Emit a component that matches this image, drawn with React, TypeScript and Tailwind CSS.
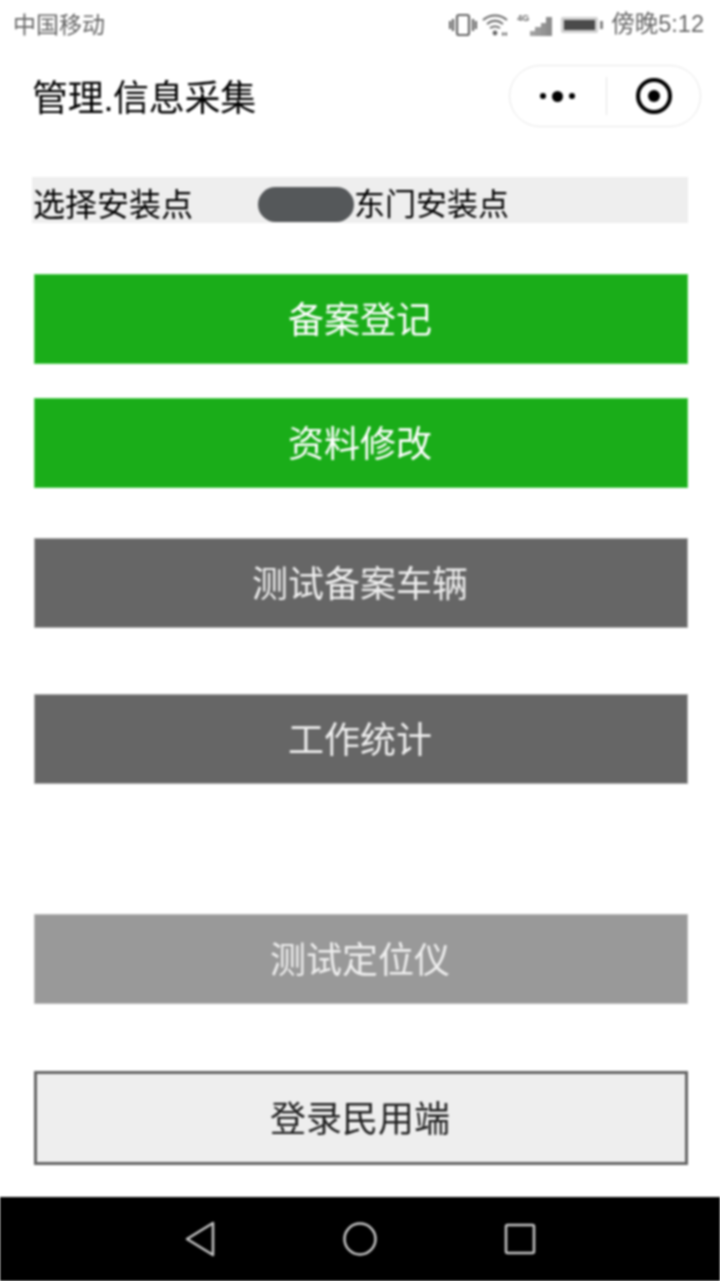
const cjk = "font-['Liberation_Sans','Noto_Sans_CJK_SC',sans-serif]";

function StatusIcons() {
  return (
    <div className="flex items-center gap-[5px] text-[#666]">
      <svg width="28" height="24" viewBox="0 0 28 24" fill="none" stroke="currentColor" strokeWidth="2.2">
        <rect x="8" y="2" width="12" height="20" rx="2" />
        <path d="M4 6v12M24 6v12M1 8v8M27 8v8" />
      </svg>
      <svg width="28" height="24" viewBox="0 0 28 24" fill="none" stroke="currentColor" strokeWidth="1.8">
        <path d="M1 7c7-6 17-6 24 0M5 11c5-4 11-4 16 0M8 15c3-2 7-2 10 0" />
        <circle cx="13" cy="20" r="1.5" fill="currentColor" />
        <path d="M20 21h6" strokeWidth="3" strokeDasharray="2 1" />
      </svg>
      <div className="relative h-[24px] w-[38px]">
        <span className="absolute left-[2px] top-[1px] text-[9px] font-bold leading-none">4G</span>
        <svg width="38" height="24" viewBox="0 0 38 24" fill="currentColor">
          <rect x="15" y="18" width="5" height="5" opacity="0.6" />
          <rect x="20" y="14" width="6" height="9" opacity="0.65" />
          <rect x="26" y="10" width="5" height="13" opacity="0.7" />
          <rect x="31" y="4" width="6" height="19" opacity="0.75" />
        </svg>
      </div>
      <svg width="44" height="24" viewBox="0 0 44 24" fill="currentColor" className="ml-[2px]">
        <rect x="1" y="4" width="37" height="16" rx="2" fill="#cfcfcf" />
        <rect x="4" y="7" width="31" height="10" fill="#4a4a4a" />
        <rect x="40" y="8" width="3" height="8" opacity="0.8" />
      </svg>
      <span className="ml-[2px] text-[23.5px] leading-none">傍晚5:12</span>
    </div>
  );
}

function Capsule() {
  return (
    <div className="flex h-[62px] w-[192px] items-center rounded-full border border-[#e8e8e8] bg-white">
      <div className="flex w-[96px] items-center justify-center gap-[6px] pr-[2px]">
        <span className="size-[6px] rounded-full bg-black" />
        <span className="size-[11px] rounded-full bg-black" />
        <span className="size-[6px] rounded-full bg-black" />
      </div>
      <div className="h-[38px] w-px bg-[#e4e4e4]" />
      <div className="flex flex-1 items-center justify-center">
        <div className="flex size-[36px] items-center justify-center rounded-full border-[4px] border-black">
          <span className="size-[12px] rounded-full bg-black" />
        </div>
      </div>
    </div>
  );
}

function Btn({ label, className }: { label: string; className: string }) {
  return (
    <div className={`ml-[34px] mr-[32px] flex shrink-0 items-center justify-center pr-[2px] pt-[4px] text-[36px] leading-none ${className}`}>
      {label}
    </div>
  );
}

export default function App() {
  return (
    <div className={`${cjk} flex h-[1281px] w-[720px] flex-col overflow-hidden bg-white blur-[1px]`}>
      <div className="flex h-[50px] shrink-0 items-center justify-between pl-[13px] pr-[16px]">
        <span className="text-[23px] leading-none text-[#666]">中国移动</span>
        <StatusIcons />
      </div>
      <div className="flex h-[92px] shrink-0 items-center justify-between pl-[32px] pr-[19px]">
        <h1 className="pt-[6px] text-[36px] font-normal leading-none tracking-[-0.3px] text-black">管理.信息采集</h1>
        <Capsule />
      </div>

      <div className="mx-[32px] mt-[35px] flex h-[46px] shrink-0 items-start bg-[#eeeeee] pl-[1px] pt-[12px] leading-none text-black">
        <span className="w-[225px] text-[32px]">选择安装点</span>
        <span className="-mt-[2px] h-[35px] w-[96px] shrink-0 rounded-full bg-[#55585a]" />
        <span className="text-[31px]">东门安装点</span>
      </div>

      <Btn label="备案登记" className="mt-[51px] h-[90px] border border-[#4fcf4f] bg-[#1aad19] text-white" />
      <Btn label="资料修改" className="mt-[34px] h-[90px] border border-[#4fcf4f] bg-[#1aad19] text-white" />
      <Btn label="测试备案车辆" className="mt-[50px] h-[90px] border border-[#aaa] bg-[#666666] text-[#eee]" />
      <Btn label="工作统计" className="mt-[66px] h-[90px] border border-[#aaa] bg-[#666666] text-[#eee]" />
      <Btn label="测试定位仪" className="mt-[130px] h-[90px] border border-[#bbb] bg-[#999999] text-[#eee]" />
      <Btn label="登录民用端" className="mt-[67px] h-[94px] border-[3px] border-[#666] bg-[#eeeeee] text-[#222]" />

      <div className="mt-auto flex h-[84px] shrink-0 items-center justify-center gap-[120px] bg-black text-[#c4c4c4]">
        <svg width="40" height="40" viewBox="0 0 40 40" fill="none" stroke="currentColor" strokeWidth="2.5" strokeLinejoin="round">
          <path d="M33 4 V36 L7 20 Z" />
        </svg>
        <svg width="40" height="40" viewBox="0 0 40 40" fill="none" stroke="currentColor" strokeWidth="2.5">
          <circle cx="20" cy="20" r="15.5" />
        </svg>
        <svg width="40" height="40" viewBox="0 0 40 40" fill="none" stroke="currentColor" strokeWidth="2.5">
          <rect x="6" y="6" width="28" height="28" rx="1.5" />
        </svg>
      </div>
    </div>
  );
}
